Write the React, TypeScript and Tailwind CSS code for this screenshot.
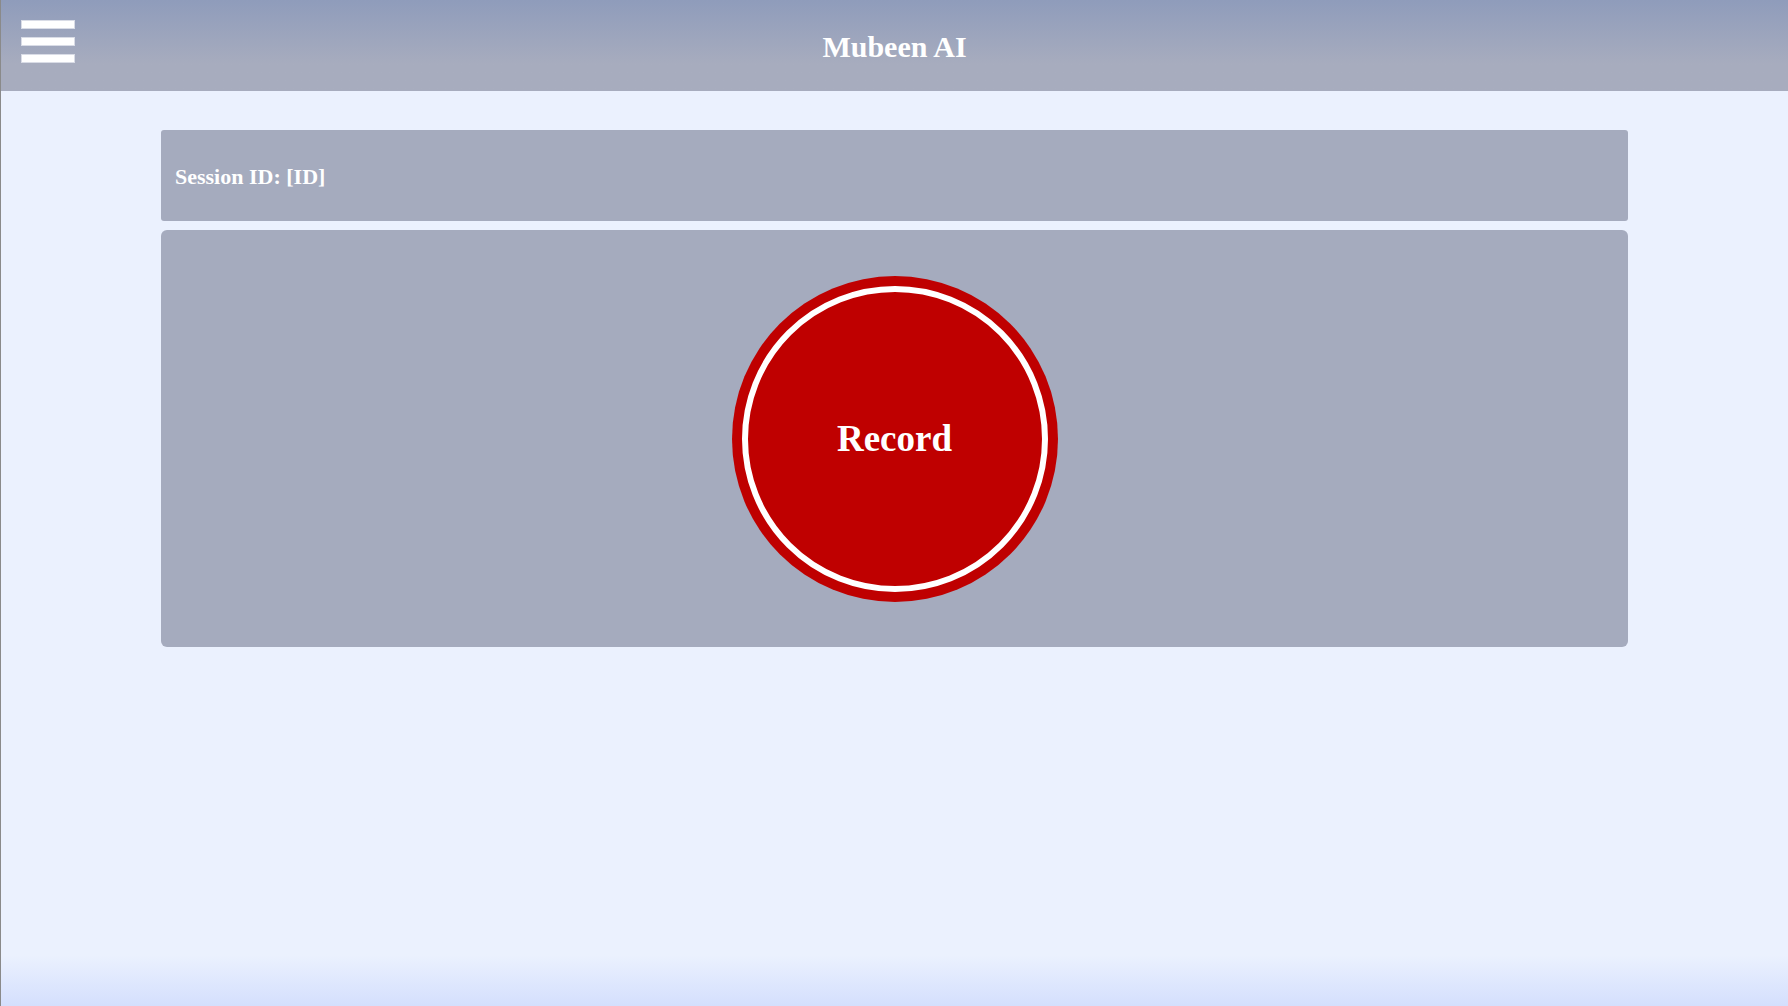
function Hamburger() {
    return (
        <button className="flex flex-col gap-[8px] w-[54px] ml-[20px] mt-[20px]">
            <span className="block h-[9px] w-full bg-white border border-[#d9dce6]"></span>
            <span className="block h-[9px] w-full bg-white border border-[#d9dce6]"></span>
            <span className="block h-[9px] w-full bg-white border border-[#d9dce6]"></span>
        </button>
    );
}

function App() {
    return (
        <div
            className="min-h-screen flex flex-col border-l border-[#8a8a8a] bg-linear-to-b from-[#ebf1fe] from-95% to-[#d4dffd]"
            style={{ fontFamily: '"Liberation Serif", "Times New Roman", serif' }}
        >
            {/* Header */}
            <header className="h-[91px] grid grid-cols-[1fr_auto_1fr] items-center bg-linear-to-b from-[#8f9cbb] to-[#a7acbe] from-0% to-70%">
                <div className="self-start">
                    <Hamburger />
                </div>
                <h1 className="text-[30px] font-bold text-white leading-none mt-[2px]">Mubeen AI</h1>
                <div></div>
            </header>

            {/* Content */}
            <main className="px-[160px] pt-[39px] flex flex-col gap-[9px]">
                <div className="h-[91px] rounded-[3px] bg-[#a5abbe] flex items-center pl-[14px]">
                    <p className="text-[22px] font-bold text-white mt-[1px]">Session ID: [ID]</p>
                </div>

                <div className="h-[417px] rounded-[6px] bg-[#a5abbe] flex items-center justify-center">
                    <button className="w-[326px] h-[326px] rounded-full bg-[#bf0000] p-[10px]">
                        <div className="w-full h-full rounded-full border-[6px] border-white flex items-center justify-center">
                            <span className="text-[37px] font-bold text-white leading-none">Record</span>
                        </div>
                    </button>
                </div>
            </main>
        </div>
    );
}

export default App;
